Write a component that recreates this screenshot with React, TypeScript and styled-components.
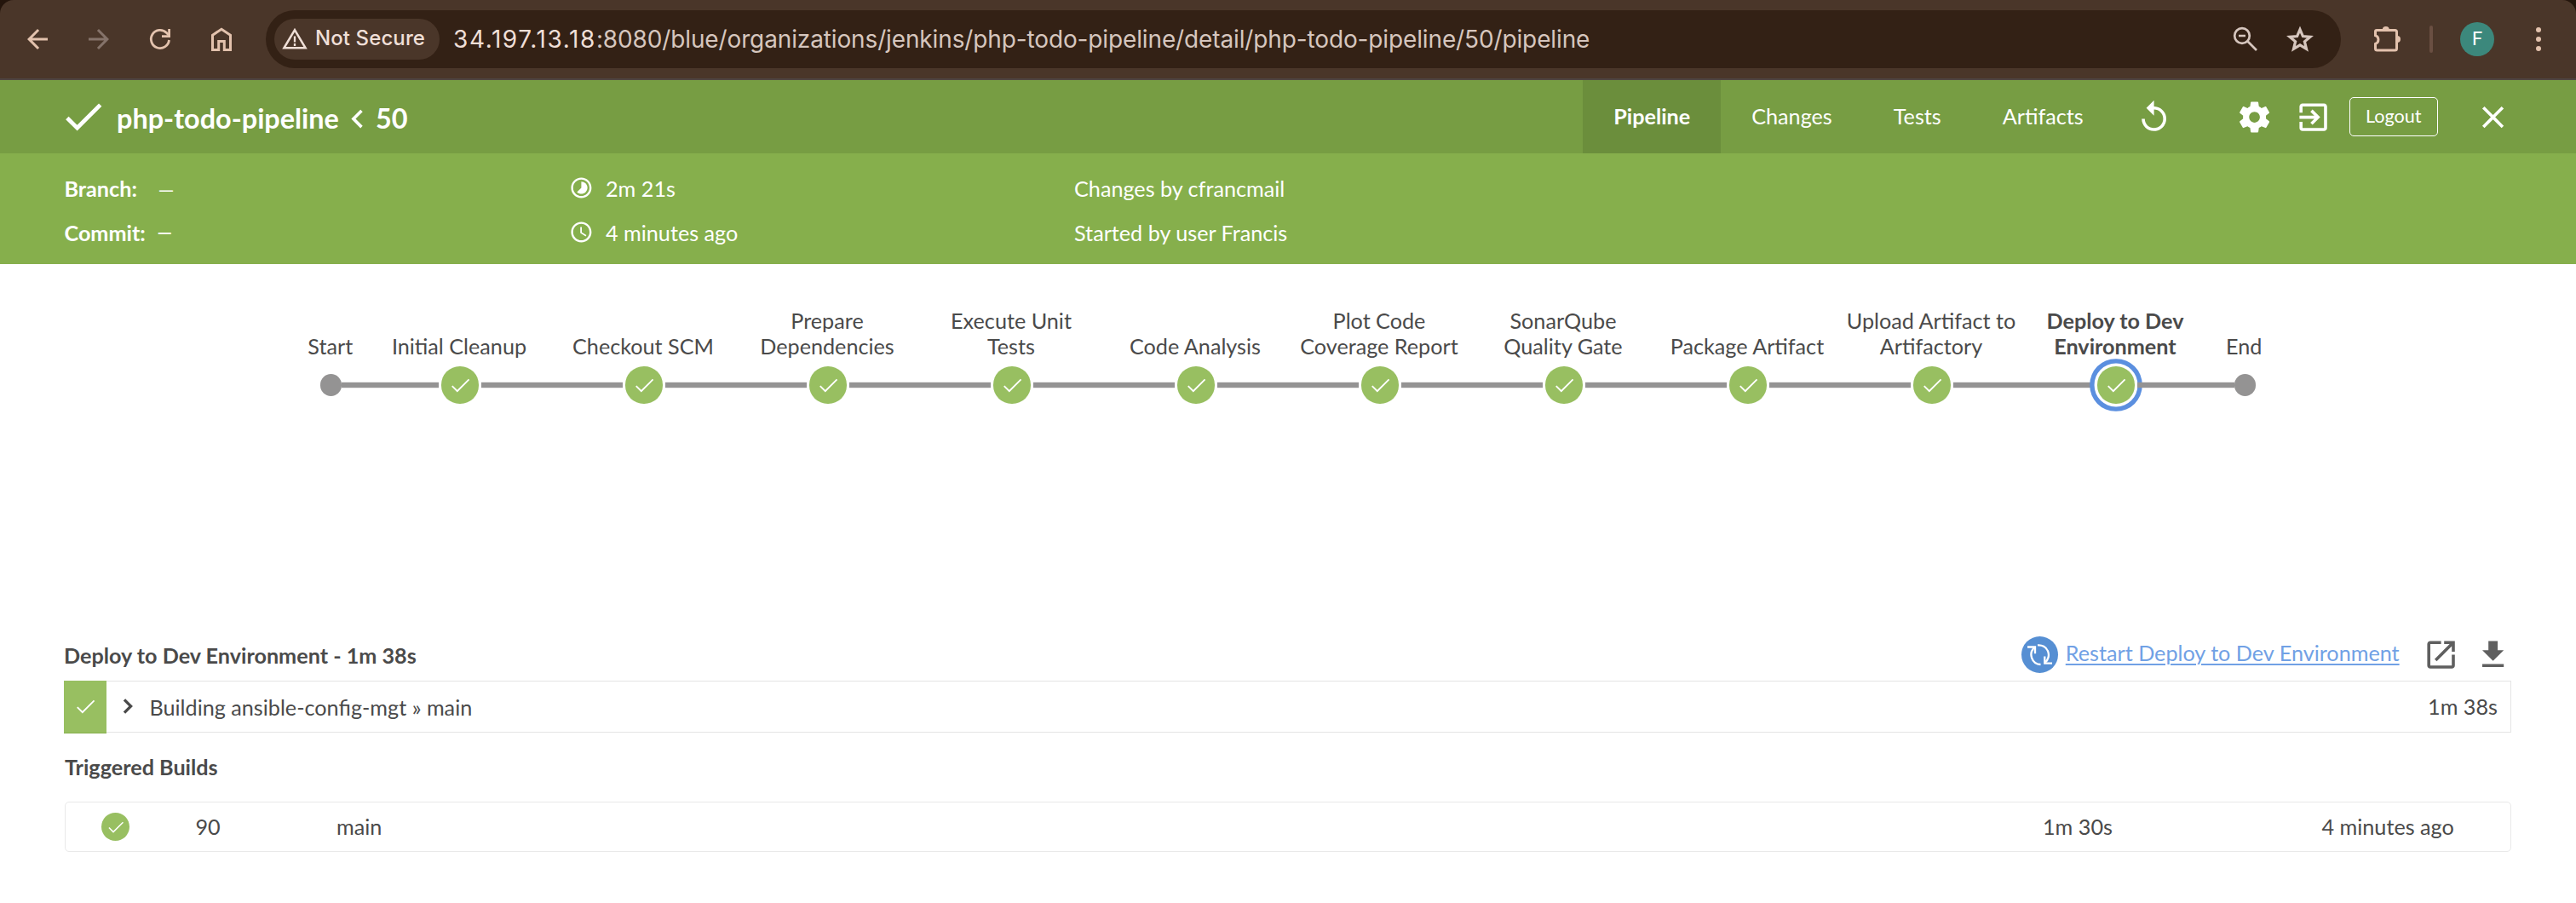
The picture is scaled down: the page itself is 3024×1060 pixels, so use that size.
import React from 'react';
import styled, { createGlobalStyle, css } from 'styled-components';

const colors = {
  chrome: '#4a3629',
  chromeDark: '#332115',
  chromeIcon: '#e3c2ad',
  header: '#779d43',
  headerActive: '#6b8e3c',
  subHeader: '#86af4c',
  success: '#98bf61',
  text: '#4a4a4a',
  track: '#949393',
  selected: '#5b8fdf',
  link: '#71a1e5',
  border: '#e4e4e4',
};

const GlobalStyle = createGlobalStyle`
  * { box-sizing: border-box; }
  body { margin: 0; background: #fff; }
  svg { display: block; flex: none; }
`;

const Page = styled.div`
  width: 3024px;
  height: 1060px;
  overflow: hidden;
  background: #fff;
  color: ${colors.text};
  font-family: Lato, 'Liberation Sans', sans-serif;
  font-size: 25.2px;
  line-height: 30.6px;
  white-space: nowrap;
`;

/* ---------- browser toolbar ---------- */

const BrowserFrame = styled.div`
  height: 94px;
  background: #24150c;
`;

const BrowserBar = styled.div`
  height: 94px;
  display: flex;
  align-items: center;
  background: ${colors.chrome};
  border-bottom: 2px solid #4e4540;
  border-radius: 16px 16px 0 0;
  font-family: Inter, 'Liberation Sans', sans-serif;
`;

const NavButtons = styled.div`
  display: flex;
  gap: 36px;
  padding-left: 26px;
  width: 312px;
`;

const AddressBar = styled.div`
  width: 2436px;
  height: 68px;
  border-radius: 34px;
  background: ${colors.chromeDark};
  display: flex;
  align-items: center;
  padding: 0 28px 0 10px;
  color: #d6c6be;
`;

const SecurityChip = styled.div`
  width: 194px;
  height: 48px;
  border-radius: 24px;
  background: ${colors.chrome};
  color: #efdfd7;
  display: flex;
  align-items: center;
  padding-left: 6px;
  gap: 8px;
`;

const ChipLabel = styled.span`
  font-size: 24px;
  font-weight: 500;
  letter-spacing: 0.1px;
  padding-bottom: 1px;
`;

const Url = styled.div`
  flex: 1;
  margin-left: 16px;
  font-size: 28px;
  line-height: 34px;
  letter-spacing: -0.13px;
`;

const UrlHost = styled.span`
  color: #efdfd7;
  letter-spacing: 1.6px;
`;

const AddressActions = styled.div`
  display: flex;
  gap: 26px;
`;

const BrowserActions = styled.div`
  flex: 1;
  display: flex;
  align-items: center;
  padding-left: 33px;
`;

const BarDivider = styled.div`
  width: 4px;
  height: 32px;
  border-radius: 2px;
  margin: 0 32px 0 29px;
  background: #6a4f42;
`;

const Avatar = styled.div`
  width: 40px;
  height: 40px;
  border-radius: 50%;
  background: #3c887c;
  color: #fff;
  display: flex;
  align-items: center;
  justify-content: center;
  font-size: 22px;
  line-height: 40px;
  font-family: Roboto, sans-serif;
  margin-right: 36px;
`;

/* ---------- run header ---------- */

const Header = styled.header`
  height: 86px;
  display: flex;
  align-items: center;
  background: ${colors.header};
  color: #fff;
  padding: 0 76px 0 68.8px;
`;

const Title = styled.h1`
  margin: 0;
  padding-top: 5px;
  font-size: 32.4px;
  font-weight: 700;
`;

const TitleName = styled(Title)`
  margin-left: 10.6px;
`;

const TitleSeparator = styled.div`
  padding-top: 5px;
`;

const Tabs = styled.nav`
  display: flex;
  margin-left: auto;
  align-self: stretch;
`;

const Tab = styled.a<{ $active?: boolean }>`
  display: flex;
  align-items: center;
  padding: 0 36px 2px;
  ${(p) =>
    p.$active &&
    css`
      background: ${colors.headerActive};
      font-weight: 700;
    `}
`;

const HeaderActions = styled.div`
  display: flex;
  align-items: center;
  padding-left: 25px;
  padding-top: 1px;
`;

const IconPair = styled.div`
  display: flex;
  gap: 25.8px;
  margin: 0 21px 0 74.8px;
`;

const LogoutButton = styled.button`
  width: 104px;
  height: 46px;
  margin: 0 43px 1px 0;
  padding: 0 0 3px;
  border: 1px solid #fff;
  border-radius: 5px;
  background: transparent;
  color: #fff;
  font-family: inherit;
  font-size: 21.6px;
`;

const SubHeader = styled.section`
  height: 130px;
  padding: 15px 76px 0 75.5px;
  background: ${colors.subHeader};
  color: #fff;
  display: grid;
  grid-template-columns: 592.5px 593px 1fr;
  grid-auto-rows: 52px;
`;

const Detail = styled.div`
  display: flex;
  align-items: center;
`;

const DetailLabel = styled.b`
  width: 110px;
`;

const Dash = styled.span<{ $bold?: boolean }>`
  font-size: ${(p) => (p.$bold ? 22 : 24)}px;
  font-weight: ${(p) => (p.$bold ? 700 : 400)};
  padding-top: ${(p) => (p.$bold ? 0 : 3)}px;
  margin-left: ${(p) => (p.$bold ? -1 : 0)}px;
`;

const DetailIcon = styled.span`
  width: 43px;
  padding-bottom: 1px;
`;

/* ---------- stage graph ---------- */

const Graph = styled.section`
  height: 434px;
  padding: 50.4px 0 0 345.6px;
  display: flex;
`;

const StageColumn = styled.div<{ $terminal?: boolean }>`
  width: ${(p) => (p.$terminal ? 86.4 : 216)}px;
`;

const StageLabel = styled.div<{ $selected?: boolean }>`
  height: 61.2px;
  padding-right: 2px;
  line-height: 30.2px;
  display: flex;
  flex-direction: column;
  justify-content: flex-end;
  align-items: center;
  text-align: center;
  font-weight: ${(p) => (p.$selected ? 700 : 400)};
`;

const NodeRow = styled.div`
  height: 60.8px;
  display: flex;
  align-items: center;
`;

const Track = styled.div<{ $hidden?: boolean }>`
  flex: 1;
  height: 6px;
  ${(p) =>
    !p.$hidden &&
    css`
      background: ${colors.track};
      box-shadow: 0 1px 0 #94939333, 0 -1px 0 #94939333;
    `}
`;

const StageNode = styled.div<{ $selected?: boolean }>`
  width: 43.2px;
  height: 43.2px;
  margin: 0 3.6px;
  border-radius: 50%;
  background: ${colors.success};
  color: #fff;
  display: flex;
  align-items: center;
  justify-content: center;
  ${(p) =>
    p.$selected &&
    css`
      box-shadow: 0 0 0 3.4px #fff, 0 0 0 8.8px ${colors.selected};
    `}
`;

const TerminalNode = styled.div`
  width: 25.2px;
  height: 25.2px;
  border-radius: 50%;
  background: ${colors.track};
`;

/* ---------- steps and triggered builds ---------- */

const Content = styled.main`
  padding: 0 76px 0 75px;
`;

const StepsHeader = styled.div`
  height: 55px;
  display: flex;
  align-items: center;
`;

const Heading = styled.h2`
  margin: 0;
  font-size: 25.2px;
  font-weight: 700;
`;

const StepsTitle = styled(Heading)`
  flex: 1;
  padding-bottom: 4px;
`;

const RestartLink = styled.a`
  margin: 0 27.4px 11px 8.6px;
  color: ${colors.link};
  text-decoration: underline;
  text-decoration-thickness: 2px;
  text-underline-offset: 3px;
`;

const RestartBadge = styled.div`
  width: 43px;
  height: 43px;
  border-radius: 50%;
  background: #568fd3;
  color: #fff;
  margin-bottom: 6px;
`;

const StepIcons = styled.div`
  display: flex;
  gap: 17.6px;
  color: #5f5f5f;
  padding-bottom: 6px;
`;

const StepRow = styled.div`
  height: 62px;
  display: flex;
  align-items: flex-start;
`;

const StepStatus = styled.div`
  width: 50px;
  height: 62px;
  background: ${colors.success};
  border-bottom: 1px solid #86af4c;
  color: #fff;
  display: flex;
  align-items: center;
  justify-content: center;
`;

const StepBody = styled.div`
  flex: 1;
  height: 61px;
  border: 1px solid ${colors.border};
  border-left: 0;
  display: flex;
  align-items: center;
  padding-right: 15px;
`;

const StepChevron = styled.div`
  padding: 0 8.5px 2px 8px;
`;

const StepName = styled.span`
  flex: 1;
  padding-top: 1px;
`;

const SectionTitle = styled(Heading)`
  padding: 23.5px 1px 0;
  height: 80px;
`;

const BuildRow = styled.div`
  height: 59px;
  margin-left: 1px;
  border: 1px solid #e9e9e9;
  border-radius: 5px;
  display: grid;
  grid-template-columns: 42px 110.5px 165.5px 1fr 327.5px 221.5px;
  align-items: center;
`;

const BuildStatus = styled.div`
  grid-column: 2;
  width: 33px;
  height: 33px;
  border-radius: 50%;
  background: ${colors.success};
  color: #fff;
  display: flex;
  align-items: center;
  justify-content: center;
`;

/* ---------- icons ---------- */

const GLYPHS = {
  back: 'M20 11H7.83l5.59-5.59L12 4l-8 8 8 8 1.41-1.41L7.83 13H20v-2z',
  forward: 'M12 4l-1.41 1.41L16.17 11H4v2h12.17l-5.58 5.59L12 20l8-8z',
  check: 'M9 16.17L4.83 12l-1.42 1.41L9 19 21 7l-1.41-1.41z',
  thinCheck: 'M9 16.4L4.5 12l-1.09 1.1L9 18.7 21 6.7l-1.05-1.05z',
  chevronLeft: 'M15.41 7.41L14 6l-6 6 6 6 1.41-1.41L10.83 12z',
  chevronRight: 'M8.3 16.59L12.88 12 8.3 7.41 10 5.8l6.2 6.2-6.2 6.2z',
  replay:
    'M12 5V1L7 6l5 5V7c3.31 0 6 2.69 6 6s-2.69 6-6 6-6-2.69-6-6H4c0 4.42 3.58 8 8 8s8-3.58 8-8-3.58-8-8-8z',
  settings:
    'M19.43 12.98c.04-.32.07-.64.07-.98s-.03-.66-.07-.98l2.11-1.65c.19-.15.24-.42.12-.64l-2-3.46c-.12-.22-.39-.3-.61-.22l-2.49 1c-.52-.4-1.08-.73-1.69-.98l-.38-2.65C14.46 2.18 14.25 2 14 2h-4c-.25 0-.46.18-.49.42l-.38 2.65c-.61.25-1.17.59-1.69.98l-2.49-1c-.23-.09-.49 0-.61.22l-2 3.46c-.13.22-.07.49.12.64l2.11 1.65c-.04.32-.07.65-.07.98s.03.66.07.98l-2.11 1.65c-.19.15-.24.42-.12.64l2 3.46c.12.22.39.3.61.22l2.49-1c.52.4 1.08.73 1.69.98l.38 2.65c.03.24.24.42.49.42h4c.25 0 .46-.18.49-.42l.38-2.65c.61-.25 1.17-.59 1.69-.98l2.49 1c.23.09.49 0 .61-.22l2-3.46c.12-.22.07-.49-.12-.64l-2.11-1.65zM12 15.5c-1.93 0-3.5-1.57-3.5-3.5s1.57-3.5 3.5-3.5 3.5 1.57 3.5 3.5-1.57 3.5-3.5 3.5z',
  exit:
    'M10.09 15.59L11.5 17l5-5-5-5-1.41 1.41L12.67 11H3v2h9.67l-2.58 2.59zM19 3H5c-1.11 0-2 .9-2 2v4h2V5h14v14H5v-4H3v4c0 1.1.89 2 2 2h14c1.1 0 2-.9 2-2V5c0-1.1-.9-2-2-2z',
  close:
    'M19 6.41L17.59 5 12 10.59 6.41 5 5 6.41 10.59 12 5 17.59 6.41 19 12 13.41 17.59 19 19 17.59 13.41 12z',
  timelapse:
    'M16.24 7.76C15.07 6.59 13.54 6 12 6v6l-4.24 4.24c2.34 2.34 6.14 2.34 8.49 0 2.34-2.34 2.34-6.14-.01-8.48zM12 2C6.48 2 2 6.48 2 12s4.48 10 10 10 10-4.48 10-10S17.52 2 12 2zm0 18c-4.42 0-8-3.58-8-8s3.58-8 8-8 8 3.58 8 8-3.58 8-8 8z',
  schedule:
    'M11.99 2C6.47 2 2 6.48 2 12s4.47 10 9.99 10C17.52 22 22 17.52 22 12S17.52 2 11.99 2zM12 20c-4.42 0-8-3.58-8-8s3.58-8 8-8 8 3.58 8 8-3.58 8-8 8zm.5-13H11v6l5.25 3.15.75-1.23-4.5-2.67z',
  launch:
    'M19 19H5V5h7V3H5c-1.11 0-2 .9-2 2v14c0 1.1.89 2 2 2h14c1.1 0 2-.9 2-2v-7h-2v7zM14 3v2h3.59l-9.83 9.83 1.41 1.41L19 6.41V10h2V3h-7z',
  download: 'M19 9h-4V3H9v6H5l7 7 7-7zM5 18v2h14v-2H5z',
};

type GlyphProps = { name: keyof typeof GLYPHS; size: number; color?: string };

const Glyph = ({ name, size, color = 'currentColor' }: GlyphProps) => (
  <svg width={size} height={size} viewBox="0 0 24 24" fill={color}>
    <path d={GLYPHS[name]} />
  </svg>
);

const ReloadIcon = () => (
  <svg width="36" height="36" viewBox="0 0 36 36" fill="none" stroke={colors.chromeIcon} strokeWidth="2.8">
    <path d="M28.5 19A10.6 10.6 0 1 1 25.5 10.5L28.5 13.6" />
    <path d="M28.6 6v8.6H20" />
  </svg>
);

const HomeIcon = () => (
  <svg width="36" height="36" viewBox="0 0 36 36" fill="none" stroke={colors.chromeIcon} strokeWidth="3">
    <path d="M7.5 30.5V13.2L18 6.2l10.5 7V30.5h-7.2V20.5h-6.6v10z" />
  </svg>
);

const WarningIcon = () => (
  <svg width="34" height="30" viewBox="0 0 34 30" fill="none" stroke="#efdfd7" strokeWidth="2.6">
    <path d="M5.5 25.2L18 4.2l12.5 21z" />
    <path d="M18 11.5v7M18 20v3" strokeWidth="2.3" />
  </svg>
);

const ZoomOutIcon = () => (
  <svg width="36" height="36" viewBox="0 0 36 36" fill="none" stroke="#d6c6be" strokeWidth="2.7">
    <circle cx="14" cy="14" r="8.8" />
    <path d="M10 14h8M20.3 20.3L31 31" />
  </svg>
);

const StarIcon = () => (
  <svg width="40" height="36" viewBox="0 0 40 36" fill="none" stroke="#d6c6be" strokeWidth="3.2">
    <path d="M20 6.6l3.4 8 8.6.7-6.600 5.600 2.100 8.500L20 24.900l-7.500 4.500 2.100-8.500L8 15.300l8.600-.7z" />
  </svg>
);

const PuzzleIcon = () => (
  <svg width="42" height="36" viewBox="0 0 42 36">
    <path
      d="M9 7.5h21.5a2 2 0 0 1 2 2V29a2 2 0 0 1-2 2H9.5a2 2 0 0 1-2-2v-5.5a5.2 5.2 0 0 0 0-9.8V9a1.5 1.5 0 0 1 1.5-1.5z"
      fill="none"
      stroke={colors.chromeIcon}
      strokeWidth="3"
    />
    <path d="M15.8 7a4 4 0 0 1 8 0zM33 14a4 4 0 0 1 0 8z" fill={colors.chromeIcon} />
  </svg>
);

const MenuIcon = () => (
  <svg width="36" height="36" viewBox="0 0 36 36" fill={colors.chromeIcon}>
    <circle cx="16" cy="7" r="3" />
    <circle cx="16" cy="18" r="3" />
    <circle cx="16" cy="29" r="3" />
  </svg>
);

const RestartIcon = () => (
  <svg width="43" height="43" viewBox="0 0 43 43" fill="none" stroke="currentColor" strokeWidth="2.3">
    <path d="M7 12.5h9v7.8" />
    <path d="M15.5 12.8A11.5 11.5 0 0 0 22.5 33" />
    <path d="M19 10.4A11.5 11.5 0 0 1 27.6 30.8" />
    <path d="M27.3 23.5V31.6h8.7" />
  </svg>
);

/* ---------- page ---------- */

const TABS = ['Pipeline', 'Changes', 'Tests', 'Artifacts'];

const STAGES: string[][] = [
  ['Initial Cleanup'],
  ['Checkout SCM'],
  ['Prepare', 'Dependencies'],
  ['Execute Unit', 'Tests'],
  ['Code Analysis'],
  ['Plot Code', 'Coverage Report'],
  ['SonarQube', 'Quality Gate'],
  ['Package Artifact'],
  ['Upload Artifact to', 'Artifactory'],
  ['Deploy to Dev', 'Environment'],
];

const Terminal = ({ label, end }: { label: string; end?: boolean }) => (
  <StageColumn $terminal>
    <StageLabel>{label}</StageLabel>
    <NodeRow>
      <Track $hidden={!end} />
      <TerminalNode />
      <Track $hidden={end} />
    </NodeRow>
  </StageColumn>
);

export default function App() {
  return (
    <Page>
      <GlobalStyle />
      <BrowserFrame>
        <BrowserBar>
          <NavButtons>
            <Glyph name="back" size={36} color={colors.chromeIcon} />
            <Glyph name="forward" size={36} color="#85736a" />
            <ReloadIcon />
            <HomeIcon />
          </NavButtons>
          <AddressBar>
            <SecurityChip>
              <WarningIcon />
              <ChipLabel>Not Secure</ChipLabel>
            </SecurityChip>
            <Url>
              <UrlHost>34.197.13.18</UrlHost>
              :8080/blue/organizations/jenkins/php-todo-pipeline/detail/php-todo-pipeline/50/pipeline
            </Url>
            <AddressActions>
              <ZoomOutIcon />
              <StarIcon />
            </AddressActions>
          </AddressBar>
          <BrowserActions>
            <PuzzleIcon />
            <BarDivider />
            <Avatar>F</Avatar>
            <MenuIcon />
          </BrowserActions>
        </BrowserBar>
      </BrowserFrame>

      <Header>
        <Glyph name="check" size={57.6} />
        <TitleName>php-todo-pipeline</TitleName>
        <TitleSeparator>
          <Glyph name="chevronLeft" size={43.2} />
        </TitleSeparator>
        <Title>50</Title>
        <Tabs>
          {TABS.map((tab, i) => (
            <Tab key={tab} $active={i === 0}>
              {tab}
            </Tab>
          ))}
        </Tabs>
        <HeaderActions>
          <Glyph name="replay" size={43.2} />
          <IconPair>
            <Glyph name="settings" size={43.2} />
            <Glyph name="exit" size={43.2} />
          </IconPair>
          <LogoutButton>Logout</LogoutButton>
          <Glyph name="close" size={43.2} />
        </HeaderActions>
      </Header>

      <SubHeader>
        <Detail>
          <DetailLabel>Branch:</DetailLabel>
          <Dash>—</Dash>
        </Detail>
        <Detail>
          <DetailIcon>
            <Glyph name="timelapse" size={28.8} />
          </DetailIcon>
          2m 21s
        </Detail>
        <Detail>Changes by cfrancmail</Detail>
        <Detail>
          <DetailLabel>Commit:</DetailLabel>
          <Dash $bold>—</Dash>
        </Detail>
        <Detail>
          <DetailIcon>
            <Glyph name="schedule" size={28.8} />
          </DetailIcon>
          4 minutes ago
        </Detail>
        <Detail>Started by user Francis</Detail>
      </SubHeader>

      <Graph>
        <Terminal label="Start" />
        {STAGES.map((lines, i) => {
          const selected = i === STAGES.length - 1;
          return (
            <StageColumn key={lines.join(' ')}>
              <StageLabel $selected={selected}>
                {lines.map((line) => (
                  <span key={line}>{line}</span>
                ))}
              </StageLabel>
              <NodeRow>
                <Track />
                <StageNode $selected={selected}>
                  <Glyph name="thinCheck" size={28.8} />
                </StageNode>
                <Track />
              </NodeRow>
            </StageColumn>
          );
        })}
        <Terminal label="End" end />
      </Graph>

      <Content>
        <StepsHeader>
          <StepsTitle>Deploy to Dev Environment - 1m 38s</StepsTitle>
          <RestartBadge>
            <RestartIcon />
          </RestartBadge>
          <RestartLink>Restart Deploy to Dev Environment</RestartLink>
          <StepIcons>
            <Glyph name="launch" size={43.2} />
            <Glyph name="download" size={43.2} />
          </StepIcons>
        </StepsHeader>
        <StepRow>
          <StepStatus>
            <Glyph name="thinCheck" size={28.8} />
          </StepStatus>
          <StepBody>
            <StepChevron>
              <Glyph name="chevronRight" size={34} />
            </StepChevron>
            <StepName>Building ansible-config-mgt » main</StepName>
            <span>1m 38s</span>
          </StepBody>
        </StepRow>
        <SectionTitle>Triggered Builds</SectionTitle>
        <BuildRow>
          <BuildStatus>
            <Glyph name="thinCheck" size={24} />
          </BuildStatus>
          <span>90</span>
          <span>main</span>
          <span>1m 30s</span>
          <span>4 minutes ago</span>
        </BuildRow>
      </Content>
    </Page>
  );
}
